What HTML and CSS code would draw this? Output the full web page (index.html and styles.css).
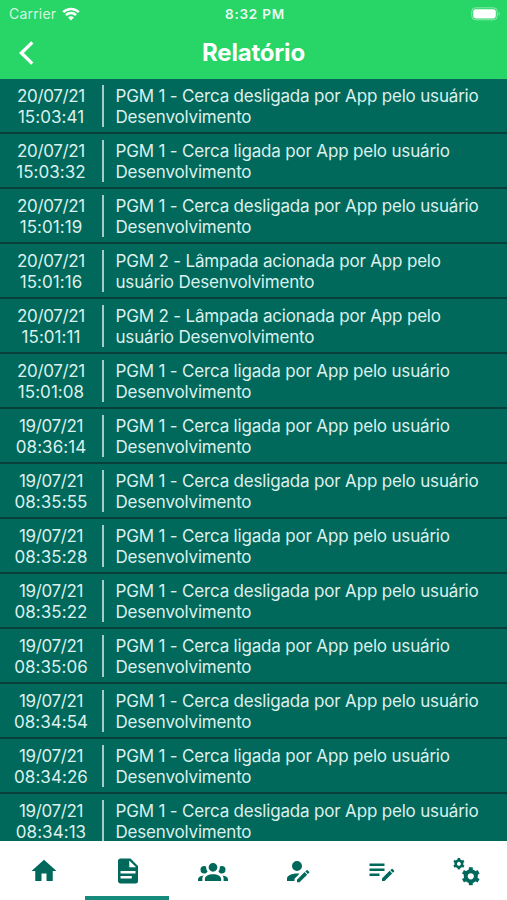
FILE: index.html
```
<!DOCTYPE html>
<html lang="pt-BR">
<head>
    <meta charset="UTF-8">
    <meta name="viewport" content="width=device-width, initial-scale=1.0">
    <title>Relatório</title>

    <link rel="stylesheet" href="styles.css">
</head>
<body>

    <header>
        <div class="status">
            <div class="carrier">
                <span>Carrier</span>
                <svg class="wifi" viewBox="0 0 18 14">
                    <path d="M1.2,5.2A11,11 0 0,1 16.8,5.2M4,8.1A7,7 0 0,1 14,8.1" />
                    <path class="dot" d="M9,13.6L6.1,10.6A4.2,4.2 0 0,1 11.9,10.6Z" />
                </svg>
            </div>
            <div class="clock">8:32 PM</div>
            <svg class="battery" viewBox="0 0 30 14">
                <rect class="shell" x="0.8" y="0.8" width="25.4" height="12" rx="3.6" />
                <rect x="2.2" y="2.2" width="22.6" height="9.2" rx="2.4" />
                <path class="tip" d="M27.6,4.8A2.4,2.4 0 0,1 27.6,8.8Z" />
            </svg>
        </div>
        <div class="titlebar">
            <a class="back" href="#">
                <svg viewBox="0 0 16 24"><path d="M13.3,1.4L2.4,12L13.3,22.6" /></svg>
            </a>
            <h1>Relatório</h1>
        </div>
    </header>

    <main class="logs">
        <div class="log">
            <div class="date">20/07/21 <span>15:03:41</span></div>
            <div class="event">PGM 1 - Cerca desligada por App pelo usuário Desenvolvimento</div>
        </div>
        <div class="log">
            <div class="date">20/07/21 <span>15:03:32</span></div>
            <div class="event">PGM 1 - Cerca ligada por App pelo usuário Desenvolvimento</div>
        </div>
        <div class="log">
            <div class="date">20/07/21 <span>15:01:19</span></div>
            <div class="event">PGM 1 - Cerca desligada por App pelo usuário Desenvolvimento</div>
        </div>
        <div class="log">
            <div class="date">20/07/21 <span>15:01:16</span></div>
            <div class="event">PGM 2 - Lâmpada acionada por App pelo usuário Desenvolvimento</div>
        </div>
        <div class="log">
            <div class="date">20/07/21 <span>15:01:11</span></div>
            <div class="event">PGM 2 - Lâmpada acionada por App pelo usuário Desenvolvimento</div>
        </div>
        <div class="log">
            <div class="date">20/07/21 <span>15:01:08</span></div>
            <div class="event">PGM 1 - Cerca ligada por App pelo usuário Desenvolvimento</div>
        </div>
        <div class="log">
            <div class="date">19/07/21 <span>08:36:14</span></div>
            <div class="event">PGM 1 - Cerca ligada por App pelo usuário Desenvolvimento</div>
        </div>
        <div class="log">
            <div class="date">19/07/21 <span>08:35:55</span></div>
            <div class="event">PGM 1 - Cerca desligada por App pelo usuário Desenvolvimento</div>
        </div>
        <div class="log">
            <div class="date">19/07/21 <span>08:35:28</span></div>
            <div class="event">PGM 1 - Cerca ligada por App pelo usuário Desenvolvimento</div>
        </div>
        <div class="log">
            <div class="date">19/07/21 <span>08:35:22</span></div>
            <div class="event">PGM 1 - Cerca desligada por App pelo usuário Desenvolvimento</div>
        </div>
        <div class="log">
            <div class="date">19/07/21 <span>08:35:06</span></div>
            <div class="event">PGM 1 - Cerca ligada por App pelo usuário Desenvolvimento</div>
        </div>
        <div class="log">
            <div class="date">19/07/21 <span>08:34:54</span></div>
            <div class="event">PGM 1 - Cerca desligada por App pelo usuário Desenvolvimento</div>
        </div>
        <div class="log">
            <div class="date">19/07/21 <span>08:34:26</span></div>
            <div class="event">PGM 1 - Cerca ligada por App pelo usuário Desenvolvimento</div>
        </div>
        <div class="log">
            <div class="date">19/07/21 <span>08:34:13</span></div>
            <div class="event">PGM 1 - Cerca desligada por App pelo usuário Desenvolvimento</div>
        </div>
    </main>

    <nav>
        <a class="tab" href="#">
            <svg viewBox="0 0 24 24"><path d="M10,20V14H14V20H19V12H22L12,3L2,12H5V20H10Z" /></svg>
        </a>
        <a class="tab active" href="#">
            <svg viewBox="0 0 24 24"><path d="M13,9H18.5L13,3.5V9M6,2H14L20,8V20A2,2 0 0,1 18,22H6C4.89,22 4,21.1 4,20V4C4,2.89 4.89,2 6,2M15,18V16H6V18H15M18,14V12H6V14H18Z" /></svg>
        </a>
        <a class="tab" href="#">
            <svg viewBox="0 0 24 24"><path d="M12,5.5A3.5,3.5 0 0,1 15.5,9A3.5,3.5 0 0,1 12,12.5A3.5,3.5 0 0,1 8.5,9A3.5,3.5 0 0,1 12,5.5M5,8C5.56,8 6.08,8.15 6.53,8.42C6.38,9.85 6.8,11.27 7.66,12.38C7.16,13.34 6.16,14 5,14A3,3 0 0,1 2,11A3,3 0 0,1 5,8M19,8A3,3 0 0,1 22,11A3,3 0 0,1 19,14C17.84,14 16.84,13.34 16.34,12.38C17.2,11.27 17.62,9.85 17.47,8.42C17.92,8.15 18.44,8 19,8M5.5,18.25C5.5,16.18 8.41,14.5 12,14.5C15.59,14.5 18.5,16.18 18.5,18.25V20H5.5V18.25M0,20V18.5C0,17.11 1.89,15.94 4.45,15.6C3.86,16.28 3.5,17.22 3.5,18.25V20H0M24,20H20.5V18.25C20.5,17.22 20.14,16.28 19.55,15.6C22.11,15.94 24,17.11 24,18.5V20Z" /></svg>
        </a>
        <a class="tab" href="#">
            <svg viewBox="0 0 24 24"><path d="M21.7,13.35L20.7,14.35L18.65,12.3L19.65,11.3C19.86,11.09 20.21,11.09 20.42,11.3L21.7,12.58C21.91,12.79 21.91,13.14 21.7,13.35M12,18.94L18.06,12.88L20.11,14.93L14.06,21H12V18.94M12,14C7.58,14 4,15.79 4,18V20H10V18.11L14,14.11C13.34,14.03 12.67,14 12,14M12,4A4,4 0 0,0 8,8A4,4 0 0,0 12,12A4,4 0 0,0 16,8A4,4 0 0,0 12,4Z" /></svg>
        </a>
        <a class="tab" href="#">
            <svg viewBox="0 0 24 24"><path d="M2,6V8H14V6H2M2,10V12H14V10H2M20.04,10.13C19.9,10.13 19.76,10.19 19.65,10.3L18.65,11.3L20.7,13.35L21.7,12.35C21.92,12.14 21.92,11.79 21.7,11.58L20.42,10.3C20.31,10.19 20.18,10.13 20.04,10.13M18.07,11.88L12,17.94V20H14.06L20.12,13.93L18.07,11.88M2,14V16H10V14H2Z" /></svg>
        </a>
        <a class="tab" href="#">
            <svg class="gears" viewBox="0 0 30 30">
                <symbol id="gear" viewBox="-10 -10 20 20">
                    <circle r="5.4" />
                    <path d="M0,-6V-9.6M0,6V9.6M5.2,-3L8.3,-4.8M-5.2,3L-8.3,4.8M5.2,3L8.3,4.8M-5.2,-3L-8.3,-4.8" />
                </symbol>
                <use href="#gear" x="1.9" y="1.8" width="12" height="12" />
                <use href="#gear" x="10.4" y="10.9" width="18.8" height="18.8" />
            </svg>
        </a>
    </nav>

</body>
</html>
```

FILE: styles.css
```
* {
    margin: 0;
    padding: 0;
    box-sizing: border-box;
}

body {
    height: 100vh;
    display: flex;
    flex-direction: column;
    overflow: hidden;
    background: #fff;
    font-family: Inter, "Liberation Sans", sans-serif;
}

header {
    flex: none;
    height: 79px;
    background: #28d567;
    color: #fff;
}

.status {
    height: 26px;
    padding: 1px 6px 0 9px;
    display: grid;
    grid-template-columns: 1fr auto 1fr;
    align-items: center;
    font-size: 14px;
}

.carrier {
    display: flex;
    align-items: center;
    gap: 6px;
    color: #d3f7e0;
    letter-spacing: 0.2px;
}

.wifi {
    width: 18px;
    height: 14px;
    fill: none;
    stroke: #fff;
    stroke-width: 2.6;
}

.wifi .dot {
    fill: #fff;
    stroke: none;
}

.clock {
    font-size: 13.5px;
    font-weight: 600;
    letter-spacing: 0.8px;
    color: #e9fbf0;
}

.battery {
    width: 30px;
    height: 14px;
    justify-self: end;
    fill: #fff;
}

.battery .shell {
    fill: none;
    stroke: #8ce9ae;
}

.battery .tip {
    fill: #8ce9ae;
}

.titlebar {
    height: 53px;
    padding: 0 19px;
    display: grid;
    grid-template-columns: 1fr auto 1fr;
    align-items: center;
}

.back svg {
    display: block;
    width: 16px;
    height: 24px;
    fill: none;
    stroke: #fff;
    stroke-width: 3.4;
}

h1 {
    font-size: 24px;
    font-weight: 700;
    letter-spacing: -0.2px;
}

.logs {
    flex: 1;
    min-height: 0;
    overflow: hidden;
    background: #00695c;
}

.log {
    height: 55px;
    padding: 6px 16px 5px 0;
    display: flex;
    border-bottom: 2px solid #083f3a;
    color: #dcf0ed;
    font-size: 17px;
    line-height: 21px;
}

.date {
    width: 104px;
    height: 42px;
    flex: none;
    padding-top: 1px;
    border-right: 2px solid #a5ccc7;
    text-align: center;
    letter-spacing: -0.35px;
}

.date span {
    display: block;
    letter-spacing: 0.05px;
}

.event {
    padding: 1px 0 0 11.5px;
    letter-spacing: -0.18px;
}

nav {
    flex: none;
    height: 59px;
    display: flex;
}

.tab {
    flex: 1;
    padding: 4px 0 0 3px;
    display: flex;
    align-items: center;
    justify-content: center;
    border-bottom: 4px solid transparent;
}

.tab.active {
    border-color: #148a7b;
}

.tab svg {
    width: 30px;
    height: 30px;
    fill: #00695c;
}

.tab .gears {
    fill: none;
    stroke: #00695c;
    stroke-width: 4.2;
}
```
